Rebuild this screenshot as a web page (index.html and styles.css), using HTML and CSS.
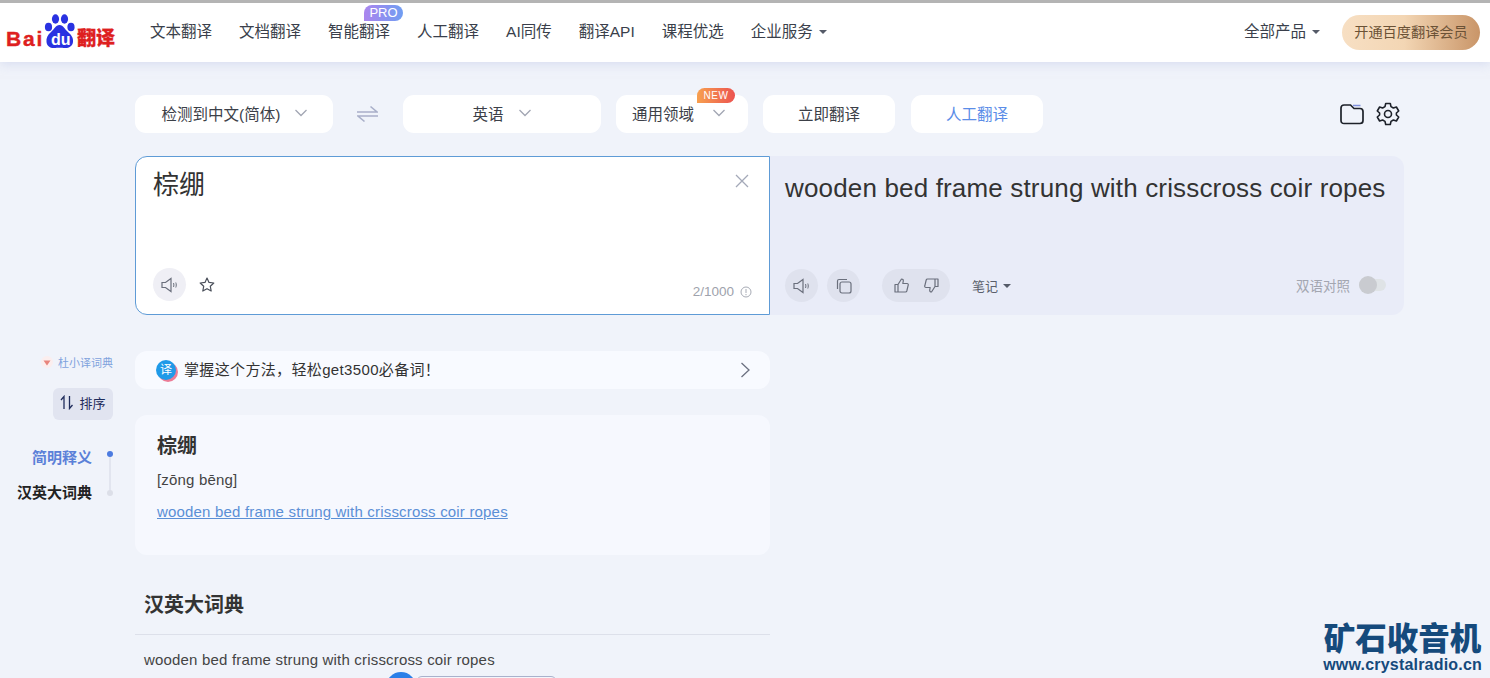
FILE: index.html
```html
<!DOCTYPE html>
<html lang="zh-CN">
<head>
    <meta charset="UTF-8">
    <meta name="viewport" content="width=device-width, initial-scale=1.0">
    <title>百度翻译</title>
    <link rel="stylesheet" href="styles.css">
</head>

<body>
<header class="header">
    <a class="logo">
        <span class="logo-bai">Bai</span>
        <span class="logo-paw">
            <svg width="33" height="35" viewBox="0 0 33 35">
                <ellipse cx="5.500" cy="13" rx="3.600" ry="4.300" fill="#2932e1"/>
                <ellipse cx="12.500" cy="5" rx="3.600" ry="4.700" fill="#2932e1"/>
                <ellipse cx="21.500" cy="5" rx="3.600" ry="4.700" fill="#2932e1"/>
                <ellipse cx="28" cy="13" rx="3.600" ry="4.300" fill="#2932e1"/>
                <path d="M16.500 11C12.500 11 11.500 15 8 18C4.500 21 3 24 3.500 28C4 32.500 8 34.500 11.500 34C14 33.700 19 33.700 21.500 34C25 34.500 29.500 32.500 30 28C30.500 24 28.500 21 25 18C21.500 15 20.500 11 16.500 11Z" fill="#2932e1"/>
            </svg>
            <span class="logo-du">du</span>
        </span>
        <span class="logo-fanyi">翻译</span>
    </a>
    <nav class="nav">
        <a>文本翻译</a>
        <a>文档翻译</a>
        <a class="nav-pro">智能翻译<span class="badge-pro">PRO</span></a>
        <a>人工翻译</a>
        <a>AI同传</a>
        <a>翻译API</a>
        <a>课程优选</a>
        <a>企业服务<i class="caret"></i></a>
    </nav>
    <div class="header-right">
        <a class="all-products">全部产品<i class="caret"></i></a>
        <a class="vip-btn">开通百度翻译会员</a>
    </div>
</header>

<main class="page">
    <div class="toolbar">
        <div class="tool tool-lang-from">检测到中文(简体)<svg class="chev" width="14" height="8" viewBox="0 0 14 8"><path d="M1.500 1L7 6.500L12.500 1"/></svg></div>
        <div class="swap">
            <svg width="21" height="18" viewBox="0 0 21 18" fill="none" stroke="#a9afc9" stroke-width="1.600">
                <path d="M0 7H20L13.500 1.500"/>
                <path d="M21 11H1L7.500 16.500"/>
            </svg>
        </div>
        <div class="tool tool-lang-to">英语<svg class="chev" width="14" height="8" viewBox="0 0 14 8"><path d="M1.500 1L7 6.500L12.500 1"/></svg></div>
        <div class="tool tool-domain">通用领域<svg class="chev" width="14" height="8" viewBox="0 0 14 8"><path d="M1.500 1L7 6.500L12.500 1"/></svg><span class="badge-new">NEW</span></div>
        <div class="tool tool-small">立即翻译</div>
        <div class="tool tool-small tool-human">人工翻译</div>
        <div class="tool-icons">
            <svg width="24" height="22" viewBox="0 0 24 22" fill="none" stroke="#1d2129" stroke-width="1.700">
                <path d="M1 5C1 3 2.200 2 4 2H10.500L14 5.500H20C22 5.500 23 6.500 23 8.500V17.500C23 19.500 22 20.500 20 20.500H4C2.200 20.500 1 19.500 1 17.500Z"/>
                <path d="M13 2.500H20.500" stroke="#7f8fdc" stroke-width="1.500"/>
            </svg>
            <svg width="24" height="24" viewBox="0 0 24 24" fill="none" stroke="#1d2129" stroke-width="1.600" stroke-linejoin="round">
                <circle cx="12" cy="12" r="3.500"/>
                <path d="M9.700 1.500H14.300L15 4.600L17.400 6L20.400 5L22.700 9L20.400 11V13L22.700 15L20.400 19L17.400 18L15 19.400L14.300 22.500H9.700L9 19.400L6.600 18L3.600 19L1.300 15L3.600 13V11L1.300 9L3.600 5L6.600 6L9 4.600Z"/>
            </svg>
        </div>
    </div>

    <section class="panels">
        <div class="panel-input">
            <div class="input-text">棕绷</div>
            <svg class="clear" width="14" height="14" viewBox="0 0 14 14" stroke="#a4a9b8" stroke-width="1.300"><path d="M1 1L13 13M13 1L1 13"/></svg>
            <div class="panel-foot">
                <span class="round-btn round-light">
                    <svg width="18" height="16" viewBox="0 0 18 16" fill="none" stroke="#6a6f7c" stroke-width="1.200"><path d="M1 5.500H4.500L10 1.500V14.500L4.500 10.500H1Z"/><path d="M12.500 6C13 7.300 13 8.700 12.500 10M14.800 5.500C15.400 7.200 15.400 8.800 14.800 10.500" stroke-width="1"/></svg>
                </span>
                <svg class="star" width="16" height="15" viewBox="0 0 16 15" fill="none" stroke="#4a4f5a" stroke-width="1.200" stroke-linejoin="round"><path d="M8 1L10 5.400L14.800 6L11.300 9.300L12.200 14L8 11.700L3.800 14L4.700 9.300L1.200 6L6 5.400Z"/></svg>
                <span class="count">2/1000
                    <svg width="12" height="12" viewBox="0 0 12 12" fill="none" stroke="#a7abb5"><circle cx="6" cy="6" r="5"/><path d="M6 3V7M6 8V9.200"/></svg>
                </span>
            </div>
        </div>
        <div class="panel-output">
            <div class="output-text">wooden bed frame strung with crisscross coir ropes</div>
            <div class="panel-foot">
                <span class="round-btn">
                    <svg width="18" height="16" viewBox="0 0 18 16" fill="none" stroke="#6a6f7c" stroke-width="1.200"><path d="M1 5.500H4.500L10 1.500V14.500L4.500 10.500H1Z"/><path d="M12.500 6C13 7.300 13 8.700 12.500 10M14.800 5.500C15.400 7.200 15.400 8.800 14.800 10.500" stroke-width="1"/></svg>
                </span>
                <span class="round-btn">
                    <svg width="16" height="16" viewBox="0 0 16 16" fill="none" stroke="#6a6f7c" stroke-width="1.200"><rect x="4" y="4" width="11" height="11" rx="2"/><path d="M1.500 11V3C1.500 2 2 1.500 3 1.500H11"/></svg>
                </span>
                <span class="vote">
                    <svg width="15" height="15" viewBox="0 0 15 15" fill="none" stroke="#6a6f7c" stroke-width="1.200" stroke-linejoin="round"><path d="M1 6.500H4V14H1ZM4 6.500L7.500 1C9 1 9.500 2 9.200 3.500L8.800 5.500H13C14 5.500 14.500 6.300 14.200 7.200L12.800 13C12.600 13.700 12 14 11.500 14H4"/></svg>
                    <svg width="15" height="15" viewBox="0 0 15 15" fill="none" stroke="#6a6f7c" stroke-width="1.200" stroke-linejoin="round"><path d="M14 8.500H11V1H14ZM11 8.500L7.500 14C6 14 5.500 13 5.800 11.500L6.200 9.500H2C1 9.500 .5 8.700 .8 7.800L2.200 2C2.400 1.300 3 1 3.500 1H11"/></svg>
                </span>
                <span class="notes">笔记<i class="caret"></i></span>
                <span class="compare">双语对照<span class="switch"><i></i></span></span>
            </div>
        </div>
    </section>

    <div class="content">
        <aside class="side">
            <a class="side-dict">
                <svg width="14" height="14" viewBox="0 0 14 14"><circle cx="7" cy="7" r="6" fill="#fbeeee"/><path d="M3.500 5.500H10.500L7 10.500Z" fill="#e8847c"/></svg>
                杜小译词典
            </a>
            <a class="side-sort">
                <svg width="14" height="15" viewBox="0 0 14 15" fill="none" stroke="#1f2c5c" stroke-width="1.300"><path d="M4 14V1.500L1 5"/><path d="M9.500 1V13.500L12.500 10"/></svg>
                排序
            </a>
            <div class="side-anchors">
                <a class="anchor anchor-active">简明释义<i></i></a>
                <a class="anchor">汉英大词典<i></i></a>
            </div>
        </aside>

        <div class="results">
            <a class="promo">
                <span class="promo-icon">译</span>
                <span class="promo-text">掌握这个方法，轻松get3500必备词！</span>
                <svg width="10" height="16" viewBox="0 0 10 16" fill="none" stroke="#6b7080" stroke-width="1.300"><path d="M1.500 1L9 8L1.500 15"/></svg>
            </a>

            <div class="card">
                <h2 class="card-title">棕绷</h2>
                <div class="card-pinyin">[zōng bēng]</div>
                <a class="card-link">wooden bed frame strung with crisscross coir ropes</a>
            </div>

            <div class="dict">
                <h2 class="dict-title">汉英大词典</h2>
                <div class="dict-text">wooden bed frame strung with crisscross coir ropes</div>
                <div class="float-widget"><span class="float-dot"></span><span class="float-pill"></span></div>
            </div>
        </div>
    </div>
</main>

<div class="watermark">
    <div class="watermark-cn">矿石收音机</div>
    <div class="watermark-url">www.crystalradio.cn</div>
</div>
</body>
</html>
```

FILE: styles.css
```css
* {
  box-sizing: border-box;
}

html, body {
  margin: 0;
  height: 678px;
  overflow: hidden;
}

body {
  position: relative;
  background: #f0f3fa;
  color: #333;
  font-family: "Liberation Sans", "Noto Sans CJK SC", sans-serif;
}

/* шапка */
.header {
  display: flex;
  align-items: center;
  height: 62px;
  padding: 0 10px 1px 6px;
  background: #fff;
  border-top: 3px solid #b4b4b4;
  box-shadow: 0 2px 10px rgba(190, 197, 230, .5);
}

.logo {
  display: flex;
  align-items: flex-end;
  width: 144px;
  height: 40px;
  padding-bottom: 2px;
}

.logo-bai {
  color: #de1f1f;
  font-size: 21px;
  font-weight: 700;
  letter-spacing: 1.800px;
  line-height: 22px;
  -webkit-text-stroke: .4px #de1f1f;
}

.logo-paw {
  position: relative;
  display: block;
  width: 33px;
  height: 35px;
  margin: 0 0 1px -1px;
}

.logo-paw svg {
  display: block;
}

.logo-du {
  position: absolute;
  left: 8px;
  bottom: 0;
  color: #fff;
  font-size: 16px;
  font-weight: 700;
  line-height: 18px;
}

.logo-fanyi {
  margin-left: 1px;
  color: #de1f1f;
  font-size: 19px;
  font-weight: 900;
  line-height: 22px;
  -webkit-text-stroke: .3px #de1f1f;
}

.nav {
  display: flex;
  gap: 27px;
}

.nav a, .all-products {
  position: relative;
  color: #3a3f4b;
  font-size: 15.500px;
  line-height: 22px;
  white-space: nowrap;
}

.badge-pro {
  position: absolute;
  top: -16px;
  left: 36px;
  width: 39px;
  height: 16px;
  border-radius: 8px 8px 8px 0;
  background: linear-gradient(90deg, #ab85ee, #6f9df2);
  color: #fff;
  font-size: 13px;
  line-height: 16px;
  text-align: center;
}

.caret {
  display: inline-block;
  margin-left: 6px;
  border: 4px solid transparent;
  border-top: 4px solid #555b68;
  border-bottom: 0;
  vertical-align: 3px;
}

.header-right {
  display: flex;
  align-items: center;
  gap: 22px;
  margin-left: auto;
}

.vip-btn {
  width: 138px;
  height: 35px;
  border-radius: 18px;
  background: linear-gradient(90deg, #f7dfc3, #f3d6b4 45%, #c99568);
  color: #6b5236;
  font-size: 14.200px;
  line-height: 34px;
  text-align: center;
}

/* основная часть */
.page {
  padding: 33px 86px 0 135px;
}

.toolbar {
  display: flex;
  align-items: center;
  height: 38px;
}

.tool {
  position: relative;
  display: flex;
  align-items: center;
  justify-content: center;
  height: 38px;
  padding-bottom: 2px;
  border-radius: 11px;
  background: #fff;
  color: #3c4048;
  font-size: 15.500px;
}

.chev {
  margin-left: 14px;
  fill: none;
  stroke: #a2a6b3;
  stroke-width: 1.300;
}

.tool-lang-from {
  width: 198px;
  padding-left: 2px;
}

.swap {
  display: flex;
  justify-content: center;
  width: 70px;
  padding-right: 1px;
}

.tool-lang-to {
  width: 198px;
}

.tool-domain {
  width: 132px;
  margin-left: 15px;
  padding-right: 6px;
}

.tool-domain .chev {
  margin-left: 18px;
}

.tool-small {
  width: 132px;
  margin-left: 15px;
}

.tool-human {
  margin-left: 16px;
  color: #5b8de8;
}

.badge-new {
  position: absolute;
  top: -7px;
  right: 13px;
  width: 38px;
  height: 15px;
  border-radius: 8px 8px 8px 0;
  background: linear-gradient(90deg, #f7a04f, #ec5350);
  color: #fff;
  font-size: 10px;
  letter-spacing: .6px;
  line-height: 15px;
  text-align: center;
}

.tool-icons {
  display: flex;
  align-items: center;
  gap: 12px;
  margin-left: auto;
  padding-right: 4px;
}

.panels {
  display: flex;
  height: 159px;
  margin-top: 23px;
}

.panel-input, .panel-output {
  position: relative;
  display: flex;
  flex-direction: column;
  justify-content: space-between;
  width: 635px;
}

.panel-input {
  padding: 11px 17px 13px 17px;
  border: 1px solid #5e9bd6;
  border-radius: 12px 0 0 12px;
  background: #fff;
}

.panel-output {
  width: 634px;
  padding: 14px 18px 13px 15px;
  border-radius: 0 12px 12px 0;
  background: #e9ecf8;
}

.input-text {
  color: #333;
  font-size: 26px;
  line-height: 34px;
}

.output-text {
  color: #333;
  font-size: 26px;
  letter-spacing: .16px;
  line-height: 36px;
  white-space: nowrap;
}

.clear {
  position: absolute;
  top: 17px;
  right: 20px;
}

.panel-foot {
  display: flex;
  align-items: center;
  height: 33px;
}

.round-btn {
  display: flex;
  align-items: center;
  justify-content: center;
  width: 33px;
  height: 33px;
  margin-right: 9px;
  border-radius: 50%;
  background: #dfe2ee;
}

.round-light {
  margin-right: 13px;
  background: #efeff5;
}

.count {
  display: flex;
  align-items: center;
  gap: 6px;
  margin-left: auto;
  margin-bottom: -14px;
  color: #9ea2ac;
  font-size: 13.500px;
}

.vote {
  display: flex;
  align-items: center;
  justify-content: center;
  gap: 15px;
  width: 68px;
  height: 33px;
  margin-left: 13px;
  border-radius: 17px;
  background: #dfe2ee;
}

.notes {
  margin-left: 22px;
  padding-bottom: 1px;
  color: #5a5f6b;
  font-size: 13px;
}

.notes .caret {
  margin-left: 5px;
}

.compare {
  display: flex;
  align-items: center;
  gap: 9px;
  margin-left: auto;
  padding-bottom: 2px;
  color: #a3a6b0;
  font-size: 13.500px;
}

.switch {
  position: relative;
  width: 27px;
  height: 12px;
  border-radius: 6px;
  background: #dfe3e6;
}

.switch i {
  position: absolute;
  top: -3px;
  left: 0;
  width: 18px;
  height: 18px;
  border-radius: 50%;
  background: #c9cbd0;
}

.content {
  display: flex;
  margin: 36px 0 0 -135px;
}

.side {
  width: 135px;
  flex: none;
  padding-right: 22px;
  text-align: right;
}

.side-dict {
  display: flex;
  align-items: center;
  justify-content: flex-end;
  gap: 4px;
  height: 22px;
  color: #7fa2dd;
  font-size: 11px;
}

.side-sort {
  display: flex;
  align-items: center;
  justify-content: center;
  gap: 5px;
  width: 60px;
  height: 32px;
  margin: 15px 0 0 auto;
  padding-bottom: 3px;
  border-radius: 6px;
  background: #e1e4f0;
  color: #1f2c5c;
  font-size: 13px;
}

.side-anchors {
  position: relative;
  margin: 19px 0 0 0;
}

/* линия между точками */
.side-anchors::before {
  content: "";
  position: absolute;
  top: 14px;
  right: 2px;
  width: 2px;
  height: 38px;
  background: #e2e5ef;
}

.anchor {
  position: relative;
  display: flex;
  align-items: center;
  justify-content: flex-end;
  gap: 15px;
  height: 35px;
  color: #222;
  font-size: 15px;
  font-weight: 700;
}

.anchor i {
  width: 6px;
  height: 6px;
  margin-top: 2px;
  border-radius: 50%;
  background: #dcdfe8;
}

.anchor-active {
  color: #5b80d8;
}

.anchor-active i {
  margin: 0 0 6px 0;
  background: #4c7be0;
}

.results {
  width: 635px;
  padding-top: 0;
}

.promo {
  display: flex;
  align-items: center;
  height: 38px;
  padding: 0 20px 0 21px;
  border-radius: 12px;
  background: #f8faff;
  color: #333;
  font-size: 15px;
  letter-spacing: .35px;
}

.promo-icon {
  width: 20px;
  height: 20px;
  margin-right: 8px;
  border-radius: 50%;
  background: #1f9ae8;
  box-shadow: 2px 2px 0 #ec7c96;
  color: #fff;
  font-size: 12px;
  letter-spacing: 0;
  line-height: 20px;
  text-align: center;
}

.promo-text {
  flex: 1;
  padding-bottom: 4px;
}

.card {
  height: 140px;
  margin-top: 26px;
  padding: 17px 22px;
  border-radius: 12px;
  background: #f6f8fe;
}

.card-title {
  margin: 0;
  color: #333;
  font-size: 20px;
  font-weight: 700;
  line-height: 28px;
}

.card-pinyin {
  margin-top: 10px;
  color: #444;
  font-size: 15px;
  letter-spacing: .18px;
  line-height: 20px;
}

.card-link {
  display: block;
  margin-top: 12px;
  color: #5b8fd6;
  font-size: 15px;
  letter-spacing: .18px;
  line-height: 20px;
  text-decoration: underline;
}

.dict {
  position: relative;
  margin-top: 35px;
}

.dict-title {
  height: 45px;
  margin: 0;
  padding: 1px 0 0 9px;
  border-bottom: 1px solid #dde0ea;
  color: #333;
  font-size: 20px;
  font-weight: 700;
  line-height: 28px;
}

.dict-text {
  padding: 15px 0 0 9px;
  color: #444;
  font-size: 15px;
  letter-spacing: .18px;
  line-height: 20px;
}

/* плавающий блок поверх текста */
.float-widget {
  position: absolute;
  top: 82px;
  left: 251px;
  display: flex;
  align-items: flex-start;
}

.float-dot {
  width: 30px;
  height: 30px;
  border-radius: 50%;
  background: #2a7fe8;
}

.float-pill {
  width: 141px;
  height: 30px;
  margin-top: 4px;
  border: 1px solid #a9b1cc;
  border-radius: 6px;
  background: #f4f6fb;
}

.watermark {
  position: absolute;
  right: 8px;
  bottom: 4px;
  color: #154a7c;
  text-align: center;
}

.watermark-cn {
  font-size: 31.500px;
  font-weight: 900;
  line-height: 34px;
}

.watermark-url {
  font-size: 16px;
  font-weight: 700;
  letter-spacing: .2px;
  line-height: 18px;
}
```
